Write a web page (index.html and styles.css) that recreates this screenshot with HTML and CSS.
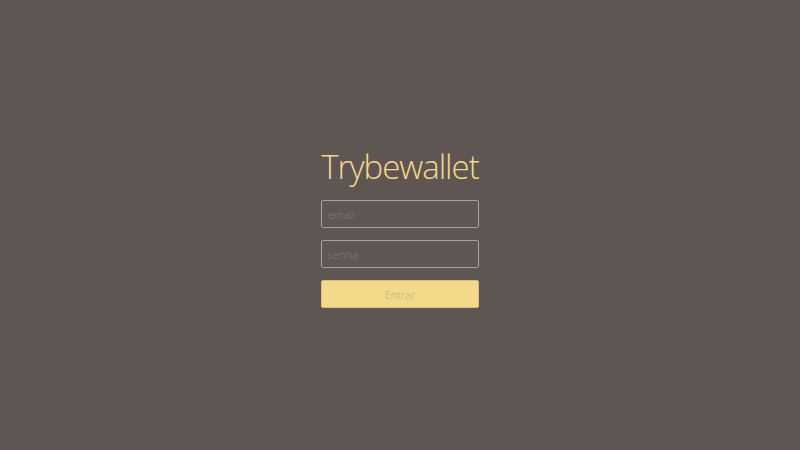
FILE: index.html
```html
<!DOCTYPE html>
<html lang="pt">
<head>
<meta charset="utf-8">
<title>Trybewallet</title>
<link rel="stylesheet" href="styles.css">
</head>
<body>
<main class="page">
  <form class="login">
    <h1 class="title">Trybewallet</h1>
    <input class="field" type="email" placeholder="email">
    <input class="field" type="password" placeholder="senha">
    <button class="btn" type="button" disabled>Entrar</button>
  </form>
</main>
</body>
</html>
```
FILE: styles.css
```css
html, body {
  margin: 0;
  height: 100%;
}
body {
  background: #5f5654;
  font-family: "Open Sans", "DejaVu Sans", sans-serif;
}
.page {
  height: 100%;
  display: flex;
  align-items: center;
  justify-content: center;
}
.login {
  width: 158px;
  display: flex;
  flex-direction: column;
  gap: 12px;
  margin-top: 2px;
}
.title {
  margin: 0;
  padding-top: 2px;
  color: #f3d88c;
  font-weight: 300;
  font-size: 33px;
  line-height: 42px;
  text-align: center;
  letter-spacing: -1px;
}
.field {
  box-sizing: border-box;
  height: 28px;
  width: 100%;
  background: transparent;
  border: 1.5px solid #aaa19d;
  border-radius: 2px;
  padding: 0 6px;
  font-family: inherit;
  font-weight: 300;
  font-size: 11px;
  color: #eee;
}
.field::placeholder {
  color: #867c78;
}
.btn {
  box-sizing: border-box;
  height: 28px;
  width: 100%;
  background: #f3d98a;
  border: 1px solid #d9c07a;
  border-radius: 2px;
  color: #c2ae78;
  font-family: inherit;
  font-weight: 300;
  font-size: 11px;
}
```
